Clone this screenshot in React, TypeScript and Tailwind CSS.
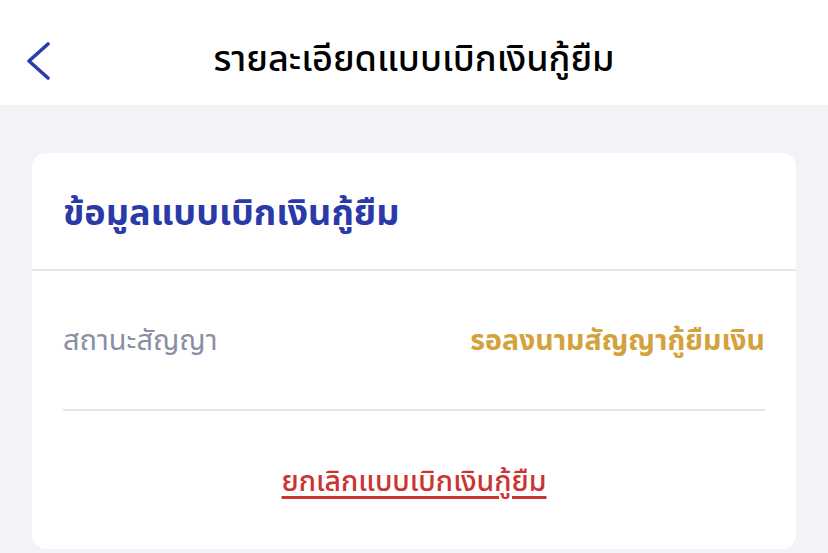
const thai = "font-['Noto_Sans_Thai','Noto_Sans',Roboto,sans-serif]";

export default function App() {
	return (
		<div className={`min-h-[553px] w-full bg-[#f2f2f7] ${thai}`}>
			<header className="relative flex h-[105px] items-center justify-center bg-white pt-[14px]">
				<button className="absolute left-[24px] top-[40px] text-[#2b3cab]">
					<svg width="28" height="42" viewBox="0 0 28 42" fill="none">
						<polyline
							points="24,4 5,21 24,38"
							stroke="currentColor"
							strokeWidth="3.6"
							strokeLinecap="round"
							strokeLinejoin="round"
						/>
					</svg>
				</button>
				<h1 className="text-[36px] font-medium text-black">
					รายละเอียดแบบเบิกเงินกู้ยืม
				</h1>
			</header>

			<div className="px-8 pt-12">
				<div className="rounded-[14px] bg-white">
					<div className="flex h-[118px] items-center border-b-2 border-[#e5e5ea] px-[31px] pt-[6px]">
						<h2 className="text-[36px] font-bold text-[#2a3aa8]">
							ข้อมูลแบบเบิกเงินกู้ยืม
						</h2>
					</div>
					<div className="px-[31px]">
						<div className="flex h-[140px] items-center justify-between border-b-2 border-[#e5e5ea] pt-[4px]">
							<span className="text-[29px] text-[#8a8fa3]">สถานะสัญญา</span>
							<span className="text-[28.5px] font-bold text-[#d4a23c]">
								รอลงนามสัญญากู้ยืมเงิน
							</span>
						</div>
						<div className="flex h-[138px] items-center justify-center pt-[6px]">
							<a className="text-[28.5px] font-medium text-[#cc3333] underline decoration-[3px] underline-offset-[5px]">
								ยกเลิกแบบเบิกเงินกู้ยืม
							</a>
						</div>
					</div>
				</div>
			</div>
		</div>
	);
}
